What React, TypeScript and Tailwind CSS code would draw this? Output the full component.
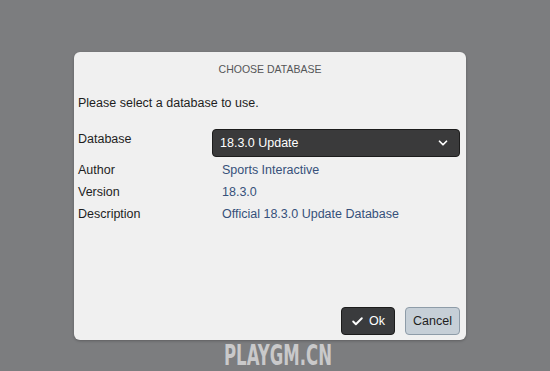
import { Check, ChevronDown } from "lucide-react";

const details = [
  { label: "Author", value: "Sports Interactive" },
  { label: "Version", value: "18.3.0" },
  { label: "Description", value: "Official 18.3.0 Update Database" },
];

export default function App() {
  return (
    <div className="flex h-[371px] w-[550px] flex-col items-start bg-[#7c7d7f] pl-[74px] pt-[52px] font-['Liberation_Sans',Arial,sans-serif]">
      <div className="flex h-[288px] w-[392px] flex-col rounded-[6px] bg-[#f0f0f0] px-1 shadow-[0_1px_3px_rgba(0,0,0,0.25)]">
        <h2 className="pt-[11px] text-center text-[10.5px] uppercase leading-[12px] text-[#555658]">
          Choose Database
        </h2>

        <p className="mt-[21px] text-[12.5px] leading-[14px] text-[#1e1e1e]">
          Please select a database to use.
        </p>

        <div className="mt-[19px] flex items-start justify-between">
          <span className="pt-[3px] text-[12.5px] leading-[14px] text-[#1e1e1e]">Database</span>
          <button
            type="button"
            className="mr-[2px] flex h-[28px] w-[248px] items-center justify-between rounded-[4px] border border-[#1c1c1c] bg-[#3a3a3b] pl-[7px] pr-[9px] text-[12.5px] text-white"
          >
            <span>18.3.0 Update</span>
            <ChevronDown size={14} strokeWidth={3} />
          </button>
        </div>

        <dl className="mt-[6px] grid grid-cols-[144px_1fr] gap-y-[8px] text-[12.5px] leading-[14px]">
          {details.map((row) => (
            <div key={row.label} className="contents">
              <dt className="text-[#1e1e1e]">{row.label}</dt>
              <dd className="text-[#36507a]">{row.value}</dd>
            </div>
          ))}
        </dl>

        <div className="mt-auto mb-[5px] flex justify-end gap-[10px] pr-[2px]">
          <button
            type="button"
            className="flex h-[28px] w-[54px] items-center justify-center gap-[5px] rounded-[4px] border border-[#1c1c1c] bg-[#3a3b3d] text-[12.5px] text-white"
          >
            <Check size={13} strokeWidth={3.5} />
            Ok
          </button>
          <button
            type="button"
            className="h-[28px] w-[55px] rounded-[4px] border border-[#8e9ca8] bg-[#c6cfd7] text-[12.5px] text-[#1e1e1e]"
          >
            Cancel
          </button>
        </div>
      </div>

      <div className="ml-[150px] mt-[1px] origin-left scale-x-[0.59] font-['DejaVu_Sans',sans-serif] text-[28px] font-bold leading-[30px] text-[#c9c9ca]">
        PLAYGM.CN
      </div>
    </div>
  );
}
